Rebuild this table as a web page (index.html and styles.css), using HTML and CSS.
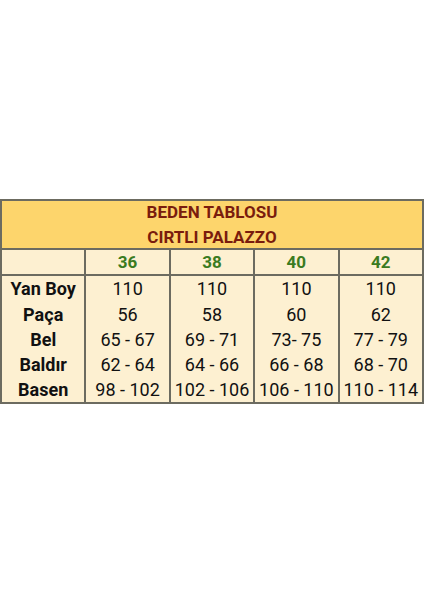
FILE: index.html
```html
<!DOCTYPE html>
<html lang="tr">
<head>
<meta charset="utf-8">
<link rel="stylesheet" href="styles.css">
</head>
<body>
<div class="page">
  <table class="size-table">
    <colgroup>
      <col class="c"><col class="c"><col class="c"><col class="c"><col class="c">
    </colgroup>
    <thead>
      <tr class="title-row">
        <th colspan="5" class="title"><div class="title-inner">BEDEN TABLOSU<br>CIRTLI PALAZZO</div></th>
      </tr>
      <tr class="size-row">
        <th></th><th>36</th><th>38</th><th>40</th><th>42</th>
      </tr>
    </thead>
    <tbody class="body-rows">
      <tr><th>Yan Boy</th><td>110</td><td>110</td><td>110</td><td>110</td></tr>
      <tr><th>Paça</th><td>56</td><td>58</td><td>60</td><td>62</td></tr>
      <tr><th>Bel</th><td>65 - 67</td><td>69 - 71</td><td>73- 75</td><td>77 - 79</td></tr>
      <tr><th>Baldır</th><td>62 - 64</td><td>64 - 66</td><td>66 - 68</td><td>68 - 70</td></tr>
      <tr><th>Basen</th><td>98 - 102</td><td>102 - 106</td><td>106 - 110</td><td>110 - 114</td></tr>
    </tbody>
  </table>
</div>
</body>
</html>
```
FILE: styles.css
```css
html, body {
  margin: 0;
  padding: 0;
  background: #ffffff;
}
.page {
  width: 424px;
  height: 600px;
  padding-top: 199px;
  box-sizing: border-box;
  font-family: Roboto, "Liberation Sans", sans-serif;
}
.size-table {
  width: 424px;
  table-layout: fixed;
  border-collapse: collapse;
  border: 2px solid #6c6b60;
  background: #fdf0d1;
}
.size-table .c {
  width: 20%;
}
.size-table th,
.size-table td {
  padding: 0;
  text-align: center;
  border-left: 2px solid #6c6b60;
  border-right: 2px solid #6c6b60;
}
.size-table .title {
  background: #fdd56c;
  color: #7a1c0d;
  font-weight: 700;
  font-size: 17px;
  border-bottom: 2px solid #6c6b60;
}
.title-inner {
  height: 47px;
  line-height: 25.3px;
  margin-top: -1.5px;
  margin-bottom: 1.5px;
}
.size-table .size-row th {
  color: #3b7b1f;
  font-weight: 700;
  font-size: 17px;
  line-height: 23px;
  padding: 1px 0 0;
  border-bottom: 2px solid #6c6b60;
}
.size-table .body-rows th,
.size-table .body-rows td {
  font-size: 18px;
  line-height: 21px;
  padding: 2.3px 0 1.95px;
  color: #111111;
}
.size-table .body-rows th {
  font-weight: 700;
}
.size-table .body-rows td {
  font-weight: 400;
}
```
